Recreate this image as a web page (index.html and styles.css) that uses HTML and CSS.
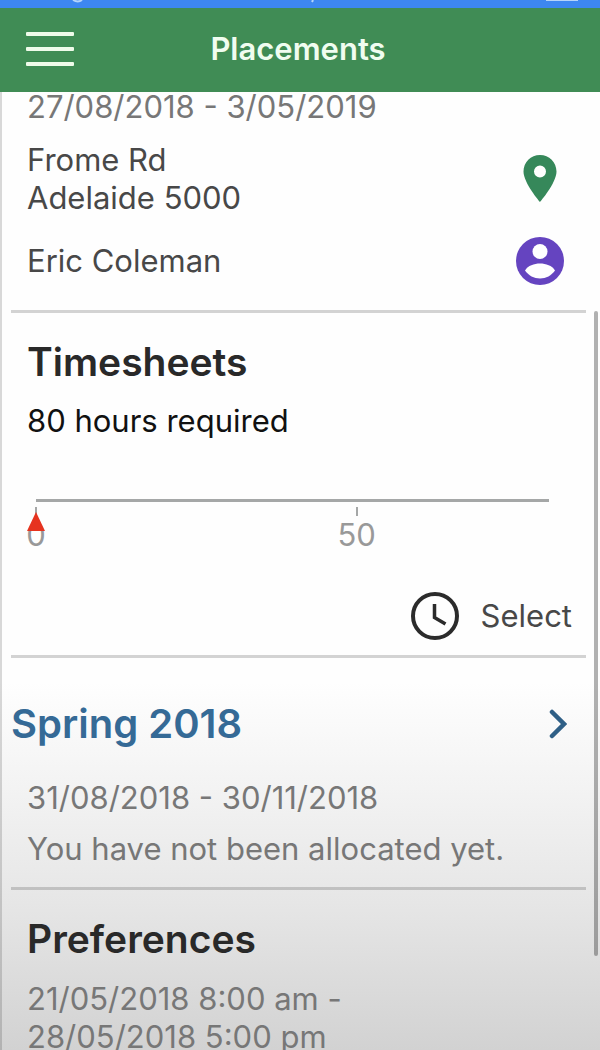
FILE: index.html
```html
<!DOCTYPE html>
<html lang="en">
<head>
    <meta charset="UTF-8">
    <meta name="viewport" content="width=device-width, initial-scale=1.0">
    <title>Placements</title>
    <link rel="stylesheet" href="styles.css">
</head>
<body>
    <div class="status-bar">
        <svg width="600" height="8" viewBox="0 0 600 8" aria-hidden="true">
            <path d="M73 0q5 3 9 0M312 2l1-2M546 0h32" />
        </svg>
    </div>
    <header class="navbar">
        <button class="menu-btn" aria-label="Menu">
            <span></span>
            <span></span>
            <span></span>
        </button>
        <h1>Placements</h1>
    </header>

    <main class="content">
        <section class="placement">
            <p class="dates first">27/08/2018 - 3/05/2019</p>
            <div class="row address">
                <p>Frome Rd<br>Adelaide 5000</p>
                <a href="#map" class="icon" aria-label="Show on map">
                    <svg width="48" height="48" viewBox="0 0 48 48">
                        <path fill="#36885a" fill-rule="evenodd" d="M24 0C14.800 0 7.500 7.300 7.500 16.500 7.500 28 24 47 24 47S40.500 28 40.500 16.500C40.500 7.300 33.200 0 24 0zm0 10.500a6 6 0 1 1 0 12 6 6 0 0 1 0-12z" />
                    </svg>
                </a>
            </div>
            <div class="row supervisor">
                <p>Eric Coleman</p>
                <a href="#contact" class="icon" aria-label="Contact">
                    <svg width="48" height="48" viewBox="0 0 48 48">
                        <circle cx="24" cy="24" r="24" fill="#6544c0" />
                        <circle cx="24" cy="14.500" r="7.500" fill="#fff" />
                        <path fill="#fff" d="M9 33.500C12 28.500 18 26.500 24 26.500S36 28.500 39 33.500C35.500 38.500 30 41.500 24 41.500S12.500 38.500 9 33.500z" />
                    </svg>
                </a>
            </div>
        </section>

        <section class="timesheets">
            <h2>Timesheets</h2>
            <p class="required">80 hours required</p>
            <div class="scale">
                <div class="mark">
                    <span class="tick"></span>
                    <span>0</span>
                    <svg class="pointer" width="18" height="19" viewBox="0 0 18 19" aria-hidden="true">
                        <path fill="#e6331f" d="M9 0L18 19H0z" />
                    </svg>
                </div>
                <div class="mark">
                    <span class="tick"></span>
                    <span>50</span>
                </div>
            </div>
            <button class="select-btn">
                <svg width="48" height="48" viewBox="0 0 48 48" aria-hidden="true">
                    <circle cx="24" cy="24" r="22" fill="none" stroke="#2b2b2b" stroke-width="4" />
                    <path fill="none" stroke="#2b2b2b" stroke-width="3.500" d="M23.500 12v13.500l11 6.500" />
                </svg>
                Select
            </button>
        </section>

        <section class="placement">
            <a href="#spring-2018" class="title-link">
                Spring 2018
                <svg width="18" height="30" viewBox="0 0 18 30" aria-hidden="true">
                    <path fill="none" stroke="#2f5f86" stroke-width="4.500" stroke-linecap="round" d="M3 3L15 15 3 27" />
                </svg>
            </a>
            <p class="dates">31/08/2018 - 30/11/2018</p>
            <p class="note">You have not been allocated yet.</p>
        </section>

        <section class="preferences">
            <h2>Preferences</h2>
            <p class="dates">21/05/2018 8:00 am -<br>28/05/2018 5:00 pm</p>
        </section>
    </main>
    <div class="scroll-thumb"></div>
</body>
</html>
```

FILE: styles.css
```css
* {
    margin: 0;
    padding: 0;
    box-sizing: border-box;
}

body {
    position: relative;
    height: 100vh;
    overflow: hidden;
    font-family: Inter, "Liberation Sans", sans-serif;
    font-size: 31px;
    line-height: 38px;
    color: #484848;
    background: linear-gradient(#fefefe 65%, #f3f3f3 75%, #e6e6e6 86%, #d2d2d2 100%);
}

.status-bar {
    height: 8px;
    overflow: hidden;
    background: #3d87f0;
}

.status-bar svg {
    display: block;
    fill: none;
    stroke: #b4d4fa;
    stroke-width: 2;
}

.navbar {
    display: grid;
    grid-template-columns: 48px 1fr 48px;
    align-items: center;
    height: 84px;
    padding: 0 30px 2px 26px;
    background: #408c55;
}

.menu-btn {
    display: flex;
    flex-direction: column;
    gap: 11px;
    border: none;
    background: none;
    cursor: pointer;
}

.menu-btn span {
    height: 4px;
    border-radius: 1px;
    background: #effbea;
}

h1 {
    font-size: 31px;
    font-weight: 600;
    text-align: center;
    color: #f0fdf0;
}

.content {
    padding: 0 14px 0 9px;
    border-left: 2px solid rgba(0, 0, 0, 0.15);
}

section {
    padding: 0 16px;
    border-bottom: 3px solid rgba(0, 0, 0, 0.17);
}

section:last-child {
    border-bottom: none;
}

h2 {
    font-size: 39px;
    font-weight: 600;
    line-height: 48px;
    color: #292929;
}

.dates,
.note {
    color: #777;
}

.dates.first {
    line-height: 30px;
}

.row {
    display: flex;
    justify-content: space-between;
    align-items: center;
    padding-right: 6px;
}

.address {
    margin-top: 19px;
}

.supervisor {
    margin-top: 20px;
    padding-bottom: 25px;
}

.icon svg {
    display: block;
}

.timesheets {
    padding-top: 25px;
    padding-bottom: 15px;
}

.required {
    margin-top: 16px;
    color: #111;
}

.scale {
    display: grid;
    grid-template-columns: 5fr 3fr;
    height: 66px;
    margin: 59px 21px 0 9px;
    padding-top: 5px;
    border-top: 3px solid #a5a7a7;
    color: #999;
}

.mark {
    position: relative;
    display: flex;
    flex-direction: column;
    align-items: center;
    width: 0;
}

.tick {
    width: 2px;
    height: 9px;
    background: #a5a7a7;
}

.pointer {
    position: absolute;
    top: 5px;
}

.select-btn {
    display: flex;
    align-items: center;
    gap: 22px;
    margin: 27px -2px 0 auto;
    border: none;
    background: none;
    font: inherit;
    color: #484848;
    cursor: pointer;
}

.title-link {
    display: flex;
    justify-content: space-between;
    align-items: center;
    margin-left: -16px;
    padding: 42px 3px 31px 0;
    font-size: 40px;
    font-weight: 600;
    line-height: 48px;
    color: #356a96;
    text-decoration: none;
}

.note {
    margin-top: 13px;
    padding-bottom: 19px;
}

.preferences {
    padding-top: 25px;
}

.preferences .dates {
    margin-top: 17px;
}

.scroll-thumb {
    position: absolute;
    top: 311px;
    right: 2px;
    width: 4px;
    height: 645px;
    border-radius: 2px;
    background: rgba(0, 0, 0, 0.3);
}
```
